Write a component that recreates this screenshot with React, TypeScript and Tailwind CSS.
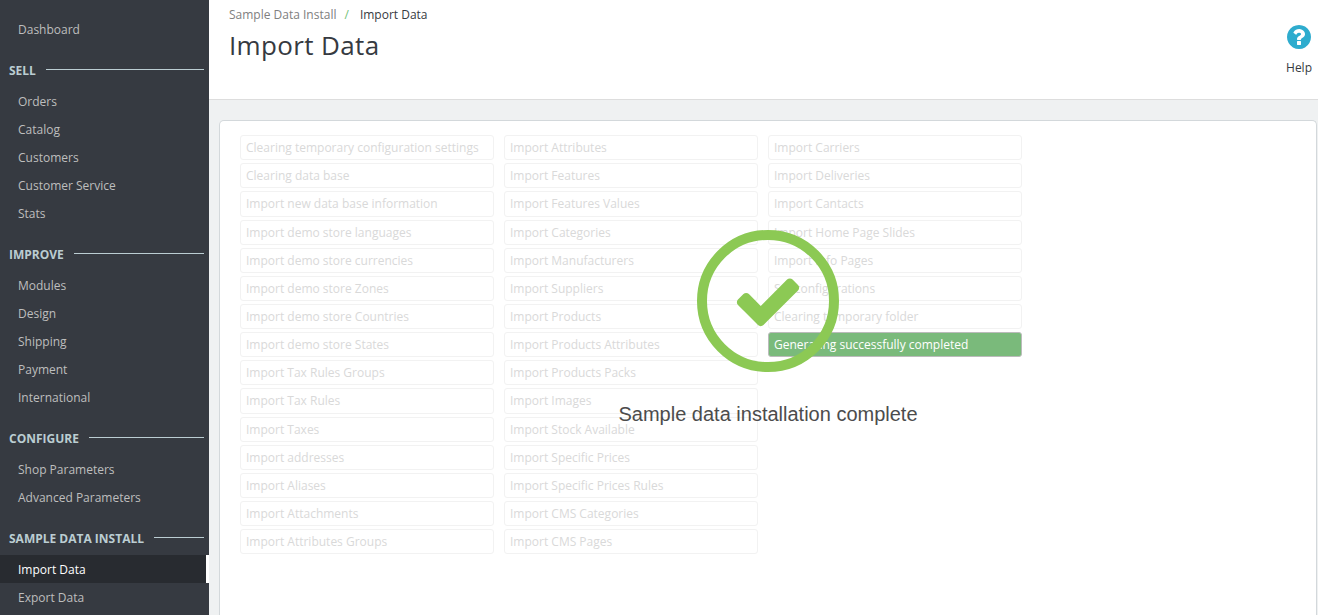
const sections = [
  { title: 'SELL', items: ['Orders', 'Catalog', 'Customers', 'Customer Service', 'Stats'] },
  { title: 'IMPROVE', items: ['Modules', 'Design', 'Shipping', 'Payment', 'International'] },
  { title: 'CONFIGURE', items: ['Shop Parameters', 'Advanced Parameters'] },
  { title: 'SAMPLE DATA INSTALL', items: ['Import Data', 'Export Data'] },
];

const columns = [
  [
    'Clearing temporary configuration settings',
    'Clearing data base',
    'Import new data base information',
    'Import demo store languages',
    'Import demo store currencies',
    'Import demo store Zones',
    'Import demo store Countries',
    'Import demo store States',
    'Import Tax Rules Groups',
    'Import Tax Rules',
    'Import Taxes',
    'Import addresses',
    'Import Aliases',
    'Import Attachments',
    'Import Attributes Groups',
  ],
  [
    'Import Attributes',
    'Import Features',
    'Import Features Values',
    'Import Categories',
    'Import Manufacturers',
    'Import Suppliers',
    'Import Products',
    'Import Products Attributes',
    'Import Products Packs',
    'Import Images',
    'Import Stock Available',
    'Import Specific Prices',
    'Import Specific Prices Rules',
    'Import CMS Categories',
    'Import CMS Pages',
  ],
  [
    'Import Carriers',
    'Import Deliveries',
    'Import Cantacts',
    'Import Home Page Slides',
    'Import Info Pages',
    'Set configurations',
    'Clearing temporary folder',
    'Generating successfully completed',
  ],
];

const ACTIVE = 'Import Data';
const DONE = 'Generating successfully completed';

function MenuItem({ label }: { label: string }) {
  const active = label === ACTIVE;
  return (
    <a
      className={
        active
          ? 'flex h-7 items-center border-r-[3px] border-white bg-[#282b30] pt-0.5 pl-[18px] text-white'
          : 'flex h-7 items-center pt-0.5 pl-[18px] text-[#bebebe]'
      }
    >
      {label}
    </a>
  );
}

function Sidebar() {
  return (
    <nav className="h-full w-[209px] shrink-0 overflow-hidden bg-[#363a41] pt-[15px]">
      <MenuItem label="Dashboard" />
      {sections.map((s) => (
        <div key={s.title}>
          <div className="flex h-11 items-center gap-2.5 pt-3 pr-[5px] pl-[9px] font-bold text-[#bbcdd2]">
            <span className="whitespace-nowrap">{s.title}</span>
            <span className="-mt-1 h-px flex-1 bg-[#bbcdd2]" />
          </div>
          {s.items.map((i) => (
            <MenuItem key={i} label={i} />
          ))}
        </div>
      ))}
    </nav>
  );
}

function Header() {
  return (
    <header className="flex h-[100px] shrink-0 justify-between border-b border-[#dddddd] bg-white pr-1.5 pl-5">
      <div className="pt-1.5">
        <div className="flex leading-[17px]">
          <span className="text-[#808080]">Sample Data Install</span>
          <span className="pr-[11px] pl-2 text-[#72c279]">/</span>
          <span className="text-[#363a41]">Import Data</span>
        </div>
        <h1 className="pt-1 text-[26px] leading-9 tracking-[0.36px] text-[#363a41]">Import Data</h1>
      </div>
      <div className="flex flex-col items-center pt-[25px] text-[#363a41]">
        <svg className="h-6 w-6" viewBox="128 128 1536 1536" fill="#2eacce">
          <path d="M1024 1376v-192q0-14-9-23t-23-9h-192q-14 0-23 9t-9 23v192q0 14 9 23t23 9h192q14 0 23-9t9-23zm256-672q0-88-55.5-163t-138.5-116-170-41q-243 0-371 213-15 24 8 42l132 100q7 6 19 6 16 0 25-12 53-68 86-92 34-24 86-24 48 0 85.500 26t37.500 59q0 38-20 61t-68 45q-63 28-115.500 86.500t-52.500 125.500v36q0 14 9 23t23 9h192q14 0 23-9t9-23q0-19 21.500-49.500t54.500-49.500q32-18 49-28.500t46-35 44.500-48 28-60.500 12.500-81zm384 192q0 209-103 385.500t-279.500 279.500-385.500 103-385.500-103-279.500-279.500-103-385.500 103-385.500 279.500-279.500 385.500-103 385.500 103 279.500 279.500 103 385.500z" />
        </svg>
        <span className="pt-2.5 leading-[17px]">Help</span>
      </div>
    </header>
  );
}

function StepRow({ label }: { label: string }) {
  const done = label === DONE;
  return (
    <li
      className={
        done
          ? 'rounded-[3px] border border-[#bbbbbb] bg-[#7aba7b] px-[5px] py-[3px] leading-[17.14px] text-white'
          : 'rounded-[3px] border border-[#f2f2f2] px-[5px] py-[3px] leading-[17.14px] text-[#d9d9d9]'
      }
    >
      {label}
    </li>
  );
}

function CompleteOverlay() {
  return (
    <div className="absolute top-[109px] left-0 flex w-full flex-col items-center">
      <div className="flex h-[142px] w-[142px] items-center justify-center rounded-full border-[10px] border-[#8cc954]">
        <svg className="h-[72px] w-[72px]" viewBox="0 0 1792 1792" fill="#8cc954">
          <path d="M1671 566q0 40-28 68l-724 724-136 136q-28 28-68 28t-68-28l-136-136-362-362q-28-28-28-68t28-68l136-136q28-28 68-28t68 28l294 295 656-657q28-28 68-28t68 28l136 136q28 28 28 68z" />
        </svg>
      </div>
      <p className="pt-[30px] font-['Liberation_Sans',Arial,sans-serif] text-[20px] leading-6 text-[#4c4c4c]">
        Sample data installation complete
      </p>
    </div>
  );
}

export default function App() {
  return (
    <div className="flex h-[615px] w-full overflow-hidden bg-[#eff1f2] font-['Open_Sans',sans-serif] text-[12px]">
      <Sidebar />
      <main className="flex min-w-0 flex-1 flex-col">
        <Header />
        <section className="relative mt-5 mr-px ml-2.5 flex-1 rounded-t-[5px] border border-b-0 border-[#d3d8db] bg-white pt-[14.16px] pl-5">
          <div className="flex items-start gap-2.5">
            {columns.map((col, i) => (
              <ul key={i} className="flex w-[254px] flex-col gap-[3px]">
                {col.map((label) => (
                  <StepRow key={label} label={label} />
                ))}
              </ul>
            ))}
          </div>
          <CompleteOverlay />
        </section>
      </main>
    </div>
  );
}
